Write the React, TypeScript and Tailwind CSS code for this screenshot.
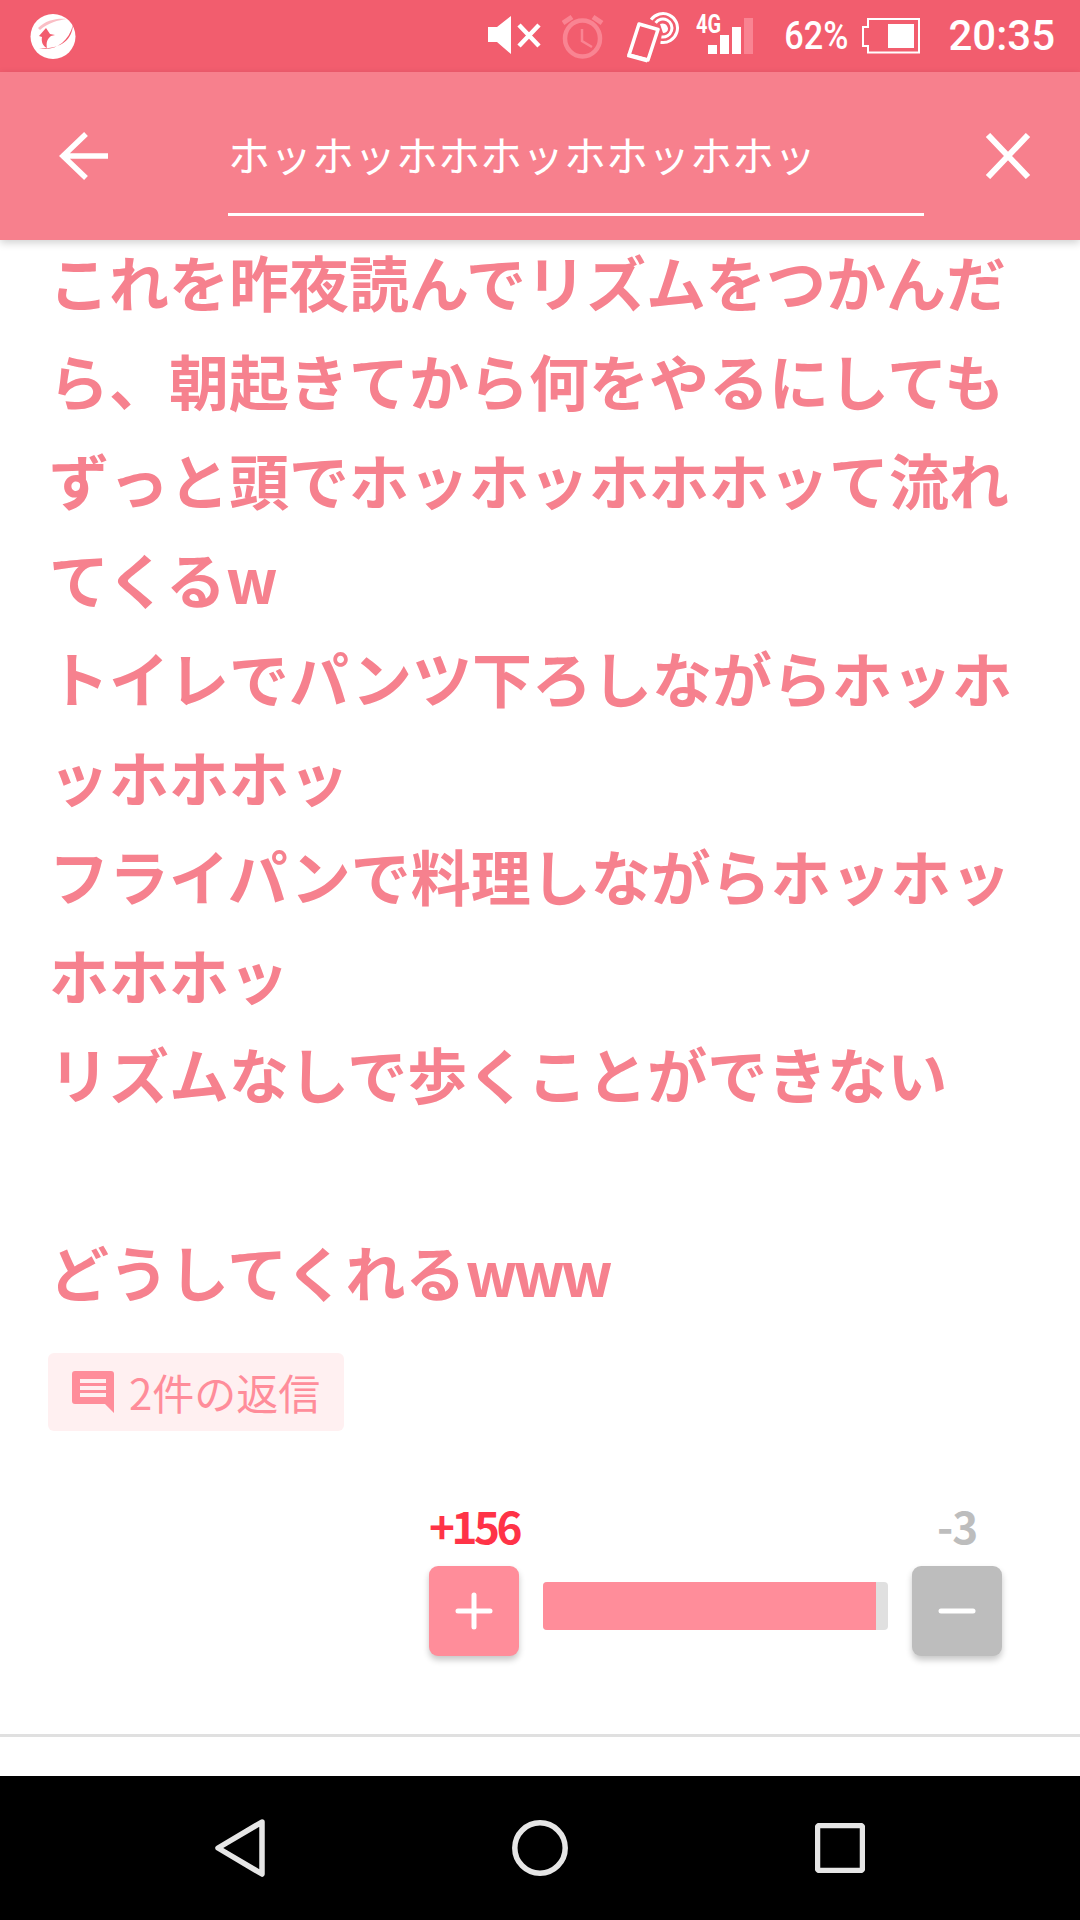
const lines: React.ReactNode[] = [
  "これを昨夜読んでリズムをつかんだ",
  "ら、朝起きてから何をやるにしても",
  "ずっと頭でホッホッホホホッて流れ",
  <>てくる<span className="tracking-[-4px]">w</span></>,
  "トイレでパンツ下ろしながらホッホ",
  "ッホホホッ",
  "フライパンで料理しながらホッホッ",
  "ホホホッ",
  "リズムなしで歩くことができない",
  "\u00a0",
  <>どうしてくれる<span className="tracking-[-4px]">www</span></>,
];

const jp = "font-['Noto_Sans_CJK_JP','Noto_Sans',sans-serif]";

function Logo() {
  return (
    <svg width="46" height="72" viewBox="0 0 46 72">
      <circle cx="23" cy="36.5" r="22.5" fill="#fff" />
      <path d="M8 28C16 20 27 18 37 19C28 20 18 23 10 30Z" fill="#f25d6e" opacity="0.4" />
      <path d="M9 48C22 52 38 44 43 25C42 40 30 50 9 48Z" fill="#f25d6e" />
      <path d="M16 28L9 36L12 37C11 42 13 46 17 48C16 43 17 39 21 36L25 35L20 34Z" fill="#f25d6e" />
    </svg>
  );
}

function Speaker() {
  return (
    <svg width="53" height="72" viewBox="0 0 53 72" className="text-white">
      <path d="M0 27H9L23 16V54L9 42H0Z" fill="currentColor" />
      <path d="M31 25L51 46M51 25L31 46" stroke="currentColor" strokeWidth="4.5" fill="none" />
    </svg>
  );
}

function Alarm() {
  return (
    <svg width="42" height="72" viewBox="0 0 42 72" className="text-[#f98492]">
      <ellipse cx="20.5" cy="38.5" rx="17.5" ry="18" stroke="currentColor" strokeWidth="4.5" fill="none" />
      <path d="M1 23L10 17M40 23L31 17" stroke="currentColor" strokeWidth="5" fill="none" />
      <path d="M20 29V41L30 47" stroke="currentColor" strokeWidth="2.5" fill="none" />
    </svg>
  );
}

function PhoneNfc() {
  return (
    <svg width="52" height="72" viewBox="0 0 52 72" className="text-white">
      <path d="M12 24L31 29.5L21 60L2 55Z" stroke="currentColor" strokeWidth="3.5" strokeLinejoin="round" fill="none" />
      <path d="M1 53L21 58.5L20 62.5L0 57Z" fill="currentColor" />
      <path d="M24.1 19.7A14.5 14.5 0 1 1 33.5 42.3" stroke="currentColor" strokeWidth="3" fill="none" />
      <path d="M28.6 22.8A9 9 0 1 1 34.4 36.9" stroke="currentColor" strokeWidth="3" fill="none" />
      <path d="M33 24C38 22 41 26 41 29C41 31 39 33 36 33Z" fill="currentColor" />
    </svg>
  );
}

function Signal() {
  return (
    <svg width="57" height="72" viewBox="0 0 57 72" className="text-white">
      <text x="0" y="32.5" fontFamily="Roboto" fontWeight="700" fontSize="25" textLength="25" lengthAdjust="spacingAndGlyphs" fill="currentColor">4G</text>
      <rect x="12" y="45" width="9" height="9" fill="currentColor" />
      <rect x="24" y="35" width="9" height="19" fill="currentColor" />
      <rect x="36" y="27" width="9" height="27" fill="currentColor" />
      <rect x="48" y="18" width="9" height="36" fill="#f98492" />
    </svg>
  );
}

function Battery() {
  return (
    <svg width="58" height="72" viewBox="0 0 58 72" className="text-white">
      <path d="M6 19H57V52.5H6V46H1V27H6Z" stroke="currentColor" strokeWidth="2" fill="none" />
      <rect x="26" y="24" width="26" height="24" fill="currentColor" />
    </svg>
  );
}

function VoteButton({ color, children }: { color: string; children: React.ReactNode }) {
  return (
    <div className={`w-[90px] h-[90px] rounded-[9px] ${color} shadow-[0_4px_6px_rgba(0,0,0,0.22)] flex items-center justify-center shrink-0`}>
      {children}
    </div>
  );
}

export default function App() {
  return (
    <div className={`w-[1080px] h-[1920px] flex flex-col overflow-hidden bg-white ${jp}`}>
      <div className="h-[72px] shrink-0 bg-[#f25d6e] flex items-center pl-[30px] pr-[25px] text-white">
        <Logo />
        <div className="ml-auto"><Speaker /></div>
        <div className="ml-[21px]"><Alarm /></div>
        <div className="ml-[23px]"><PhoneNfc /></div>
        <div className="ml-[17px]"><Signal /></div>
        <div className="ml-[28px] w-[67px] font-['Roboto',sans-serif] font-medium text-[38px] leading-none scale-x-90 whitespace-nowrap">62%</div>
        <div className="ml-[14px]"><Battery /></div>
        <div className="ml-[28px] font-['Roboto',sans-serif] font-medium text-[42px] leading-none">20:35</div>
      </div>

      <div className="relative z-10 h-[168px] shrink-0 bg-[#f7808d] shadow-[0_3px_8px_rgba(0,0,0,0.18)] flex items-start text-white">
        <svg width="50" height="50" viewBox="0 0 50 50" className="ml-[59px] mt-[59px] shrink-0">
          <path d="M49 25H4M27 3L4 25L27 47" stroke="#fff" strokeWidth="5.5" fill="none" />
        </svg>
        <div className="ml-[119px] w-[696px] h-[144px] border-b-[3px] border-white flex items-start">
          <span className="mt-[52px] text-[42px] leading-[60px] whitespace-nowrap">ホッホッホホホッホホッホホッ</span>
        </div>
        <svg width="46" height="46" viewBox="0 0 46 46" className="ml-[61px] mt-[61px] shrink-0">
          <path d="M3 2L43 44M43 2L3 44" stroke="#fff" strokeWidth="6" fill="none" />
        </svg>
      </div>

      <div className="flex-1 min-h-0 flex flex-col">
        <div className="-mt-[9px] pl-[49px] text-[60px] leading-[99px] font-bold text-[#f6818e] whitespace-nowrap">
          {lines.map((l, i) => (
            <div key={i}>{l}</div>
          ))}
        </div>

        <div className="mt-[33px] ml-[48px] w-[296px] h-[78px] rounded-[6px] bg-[#fff0f1] flex items-center pl-[24px]">
          <svg width="42" height="42" viewBox="0 0 42 42" className="shrink-0">
            <path d="M3 0H39C41 0 42 1 42 3V42L33 33H3C1 33 0 32 0 30V3C0 1 1 0 3 0Z" fill="#ff8d9a" />
            <path d="M8 8H34V12H8ZM8 15H34V19H8ZM8 22H34V26H8Z" fill="#fff0f1" />
          </svg>
          <span className="ml-[15px] text-[42px] leading-none text-[#ff8d9a]">2件の返信</span>
        </div>

        <div className="mt-[62px] ml-[429px] w-[573px] flex flex-col">
          <div className="flex justify-between h-[73px] text-[44px] leading-[64px] font-bold">
            <span className="text-[#ff3347] tracking-[-3.5px]">+156</span>
            <span className="text-[#bdbdbd] w-[90px] text-center tracking-[-1px]">-3</span>
          </div>
          <div className="flex items-start">
            <VoteButton color="bg-[#ff8d9a]">
              <svg width="40" height="40" viewBox="0 0 40 40"><path d="M20 4V36M4 20H36" stroke="#fff" strokeWidth="5" strokeLinecap="round" /></svg>
            </VoteButton>
            <div className="mx-[24px] mt-[16px] h-[48px] flex-1 rounded-[4px] bg-[#e0e0e0] overflow-hidden">
              <div className="h-full bg-[#ff8d9a]" style={{ width: `${(333 / 345) * 100}%` }} />
            </div>
            <VoteButton color="bg-[#bdbdbd]">
              <svg width="40" height="40" viewBox="0 0 40 40"><path d="M4 20H36" stroke="#fff" strokeWidth="5" strokeLinecap="round" /></svg>
            </VoteButton>
          </div>
        </div>

        <div className="mt-[78px] h-[3px] bg-[#e0e0e0] shrink-0" />
      </div>

      <div className="h-[144px] shrink-0 bg-black flex items-center relative">
        <svg width="50" height="58" viewBox="0 0 50 58" className="ml-[215px] shrink-0">
          <path d="M47 3L3 29L47 55Z" stroke="#e6e6e6" strokeWidth="5.5" strokeLinejoin="round" fill="none" />
        </svg>
        <svg width="56" height="56" viewBox="0 0 56 56" className="ml-[247px] shrink-0">
          <circle cx="28" cy="28" r="25.2" stroke="#e6e6e6" strokeWidth="5.5" fill="none" />
        </svg>
        <svg width="50" height="50" viewBox="0 0 50 50" className="ml-[247px] shrink-0">
          <rect x="2.5" y="2.5" width="45" height="45" rx="2" stroke="#e6e6e6" strokeWidth="5.5" fill="none" />
        </svg>
      </div>
    </div>
  );
}
